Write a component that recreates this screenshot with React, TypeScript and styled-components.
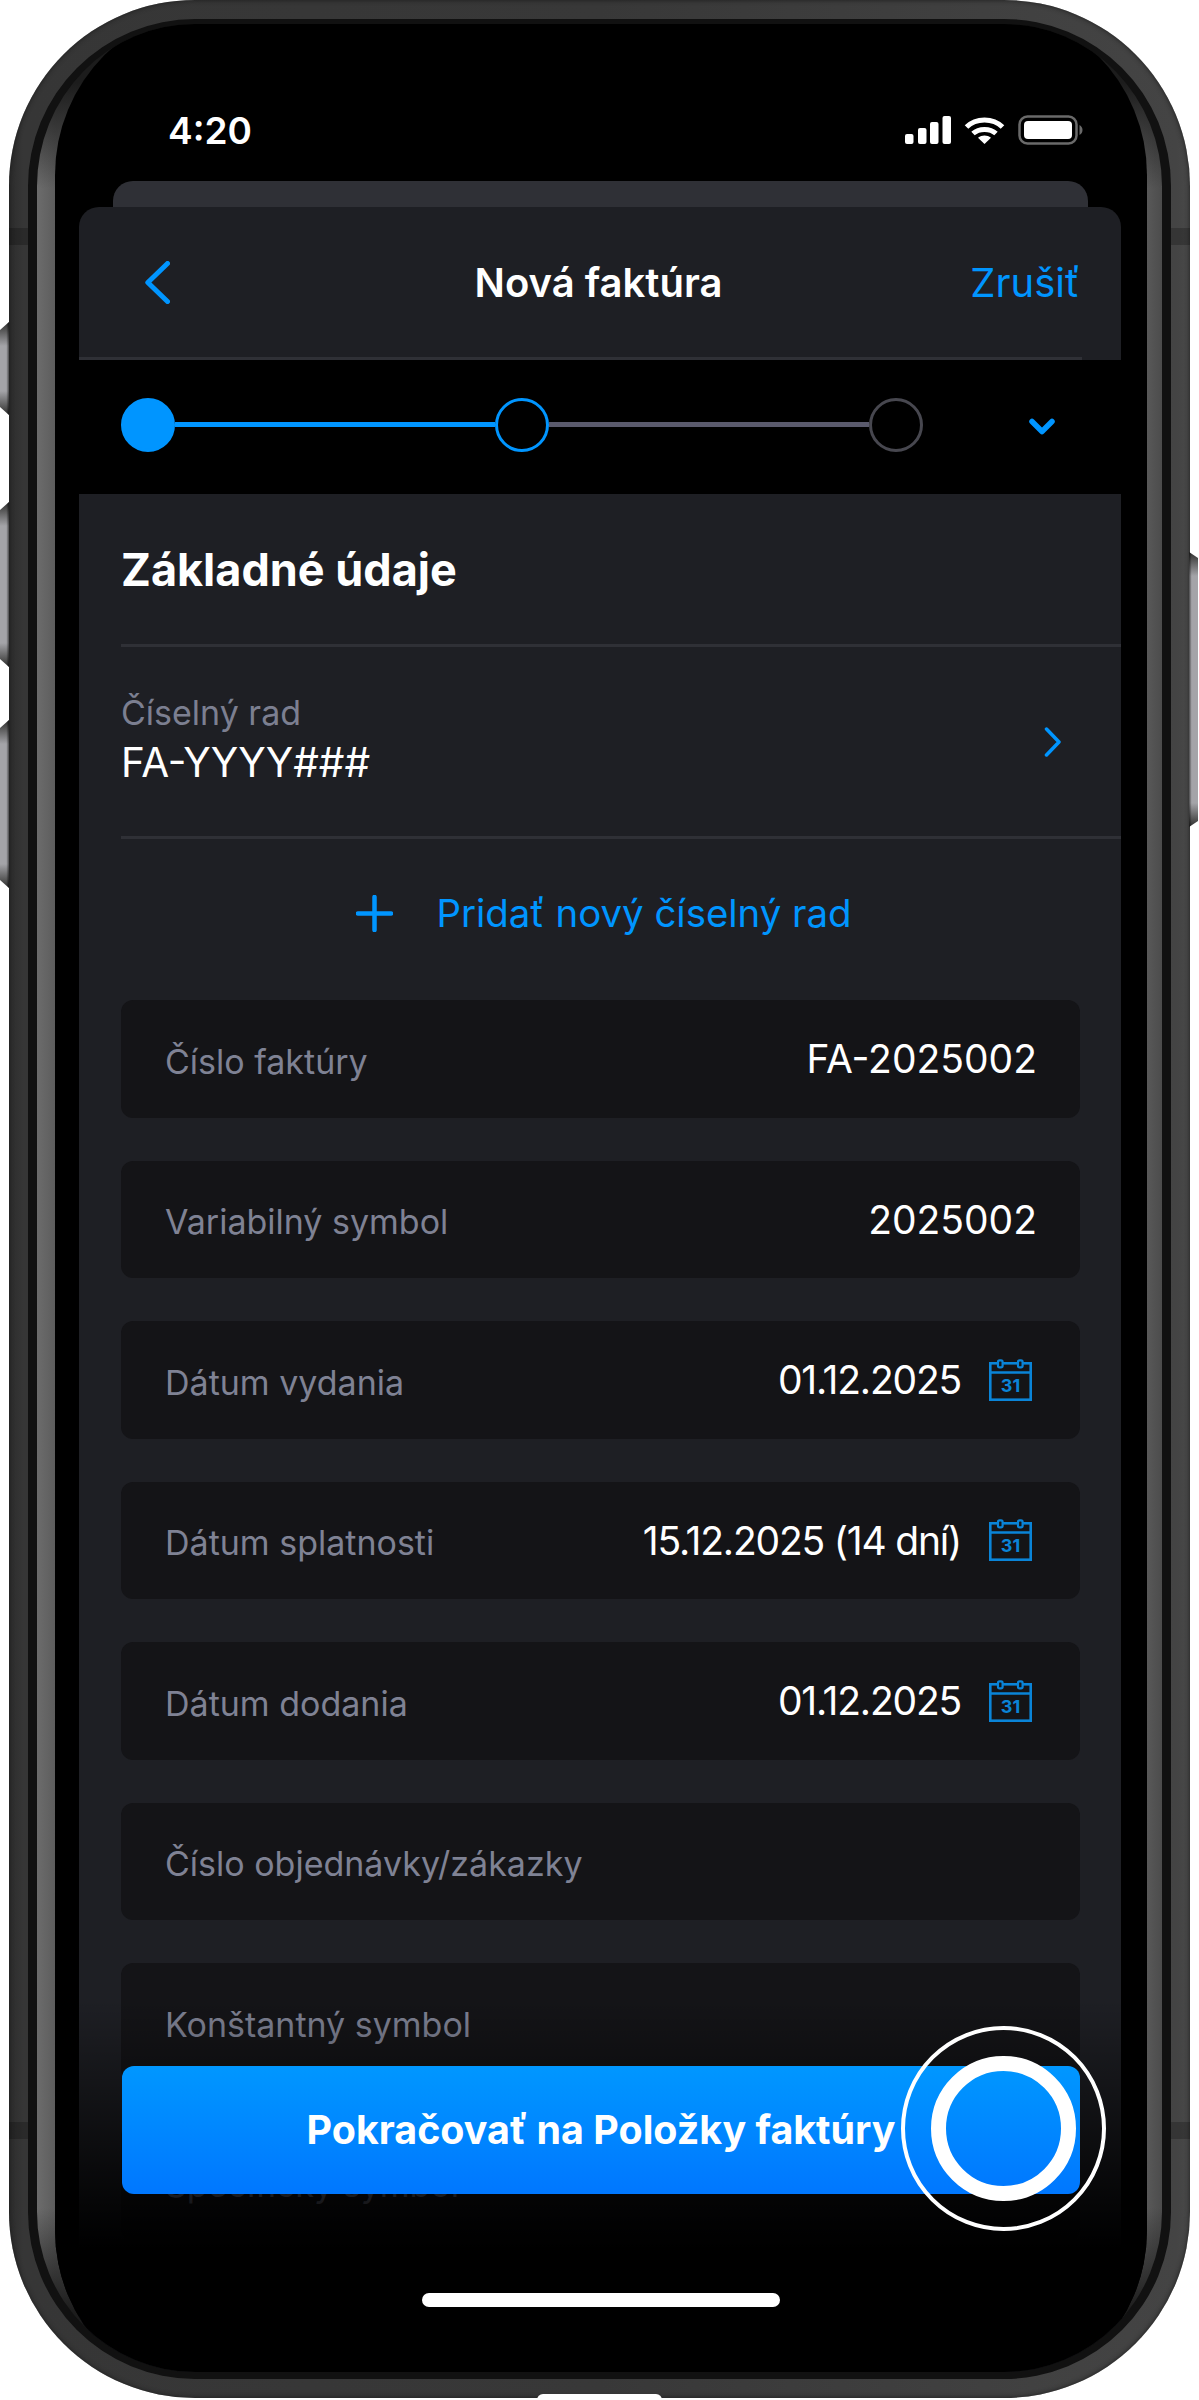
import styled, { createGlobalStyle } from 'styled-components'

interface FieldData {
	label: string
	value?: string
	calendar?: boolean
}

const FIELDS: FieldData[] = [
	{ label: 'Číslo faktúry', value: 'FA-2025002' },
	{ label: 'Variabilný symbol', value: '2025002' },
	{ label: 'Dátum vydania', value: '01.12.2025', calendar: true },
	{ label: 'Dátum splatnosti', value: '15.12.2025 (14 dní)', calendar: true },
	{ label: 'Dátum dodania', value: '01.12.2025', calendar: true },
	{ label: 'Číslo objednávky/zákazky' },
	{ label: 'Konštantný symbol' },
	{ label: 'Špecifický symbol' },
]

const BLUE = '#0095ff'

const GlobalStyle = createGlobalStyle`
	html, body {
		margin: 0;
		background: #fff;
	}
	body {
		font-family: Inter, 'Liberation Sans', sans-serif;
		overflow-x: hidden;
	}
`

const Page = styled.div`
	width: 1199px;
	height: 2400px;
	padding-left: 9px;
	box-sizing: border-box;
	overflow: hidden;
`

const Phone = styled.div`
	position: relative;
	width: 1181px;
	height: 2398px;
	box-sizing: border-box;
	padding: 19px;
	border-radius: 186px;
	background: linear-gradient(90deg, #2c2c2c 0%, #363636 1.2%, #383838 50%, #444 98.8%, #484848 100%);
	box-shadow: inset 0 0 5px #1c1c1c;
`

const Bezel = styled.div`
	height: 100%;
	box-sizing: border-box;
	border-style: solid;
	border-color: #111;
	border-width: 5px 9px 7px;
	border-radius: 167px;
	overflow: hidden;
	background:
		linear-gradient(180deg, #1c1c1c 2.5%, rgba(28, 28, 28, 0) 7%, rgba(28, 28, 28, 0) 93%, #1c1c1c 97.5%),
		linear-gradient(90deg, #6c6c6c 0, #5c5c5c 1.7%, #555 50%, #5c5c5c 98.3%, #4c4c4c 100%);
`

const Screen = styled.div`
	position: relative;
	height: 2395px;
	margin: -19px 15px 0 18px;
	border-radius: 170px;
	background: #000;
	overflow: hidden;
`

const SideButton = styled.div<{ $side: 'left' | 'right'; $top: number; $height: number }>`
	position: absolute;
	top: ${p => p.$top}px;
	height: ${p => p.$height}px;
	width: 9px;
	${p => (p.$side === 'left' ? 'left: -9px;' : 'right: -8px;')}
	background:
		linear-gradient(${p => (p.$side === 'left' ? '90deg' : '270deg')}, rgba(0, 0, 0, 0) 70%, rgba(0, 0, 0, 0.55) 100%),
		linear-gradient(180deg, #2e2e2e 0, #555 8px, #a4a4a8 24px, #a4a4a8 calc(100% - 24px), #555 calc(100% - 8px), #2e2e2e 100%);
	clip-path: ${p =>
		p.$side === 'left'
			? 'polygon(100% 0, 100% 100%, 0 calc(100% - 8px), 0 8px)'
			: 'polygon(0 0, 100% 6px, 100% calc(100% - 6px), 0 100%)'};
`

const AntennaBand = styled.div<{ $side: 'left' | 'right'; $top: number }>`
	position: absolute;
	top: ${p => p.$top}px;
	${p => p.$side}: 0;
	width: 19px;
	height: 17px;
	background: rgba(0, 0, 0, 0.22);
`

const BottomTab = styled.div`
	position: absolute;
	left: 528px;
	bottom: -2px;
	width: 125px;
	height: 6px;
	border-radius: 8px 8px 0 0;
	background: #fff;
`

const StatusBar = styled.div`
	display: flex;
	align-items: center;
	justify-content: space-between;
	height: 40px;
	padding: 105px 64px 31px 113px;
`

const Time = styled.span`
	font-size: 37px;
	font-weight: 600;
	color: #fff;
`

const StatusIcons = styled.div`
	display: flex;
	align-items: center;
	gap: 13px;
`

const BackSheet = styled.div`
	height: 26px;
	margin: 0 59px 0 58px;
	border-radius: 20px 20px 0 0;
	background: #2f3036;
`

const Sheet = styled.section`
	margin: 0 26px 0 24px;
	height: 2189px;
	border-radius: 20px 20px 0 0;
	background: #1e1f24;
	overflow: hidden;
`

const Header = styled.header`
	display: grid;
	grid-template-columns: 1fr auto 1fr;
	align-items: center;
	height: 150px;
	padding: 0 41px 0 66px;
`

const BackButton = styled.svg`
	display: block;
`

const Title = styled.h1`
	margin: 0 0 0 -28px;
	font-size: 40px;
	font-weight: 600;
	color: #fff;
`

const Cancel = styled.span`
	justify-self: end;
	font-size: 40px;
	color: ${BLUE};
`

const HeaderLine = styled.div`
	height: 3px;
	margin-right: 39px;
	background: #2f3036;
`

const Stepper = styled.div`
	display: flex;
	align-items: center;
	height: 129px;
	padding: 0 0 5px 42px;
	background: #000;
`

const Step = styled.div<{ $state: 'done' | 'current' | 'todo' }>`
	flex: none;
	width: 54px;
	height: 54px;
	box-sizing: border-box;
	border-radius: 50%;
	border: 3px solid ${p => (p.$state === 'todo' ? '#47474f' : BLUE)};
	background: ${p => (p.$state === 'done' ? BLUE : 'transparent')};
`

const StepLine = styled.div<{ $active?: boolean }>`
	flex: none;
	width: 320px;
	height: 5px;
	background: ${p => (p.$active ? BLUE : '#5a5a6c')};
`

const ExpandIcon = styled.svg`
	margin: 4px 0 0 106px;
`

const SectionTitle = styled.h2`
	display: flex;
	align-items: center;
	height: 150px;
	margin: 0 0 0 42px;
	font-size: 45px;
	font-weight: 700;
	color: #fff;
`

const Rule = styled.div`
	height: 3px;
	margin-left: 42px;
	background: #2f3036;
`

const SeriesRow = styled.div`
	display: flex;
	align-items: center;
	justify-content: space-between;
	height: 189px;
	padding: 0 60px 0 42px;
`

const SeriesText = styled.div`
	display: flex;
	flex-direction: column;
	gap: 5px;
	margin-bottom: 6px;
`

const SeriesLabel = styled.span`
	font-size: 34px;
	line-height: 44px;
	color: #7c7f91;
`

const SeriesValue = styled.span`
	font-size: 40.5px;
	line-height: 46px;
	color: #fff;
`

const AddRow = styled.div`
	display: flex;
	align-items: center;
	justify-content: center;
	gap: 43px;
	height: 148px;
	margin-bottom: 13px;
	padding-left: 8px;
	font-size: 38.4px;
	color: ${BLUE};
`

const Fields = styled.div`
	display: flex;
	flex-direction: column;
	gap: 43px;
	margin: 0 41px 0 42px;
`

const Field = styled.div`
	display: flex;
	flex: none;
	align-items: center;
	justify-content: space-between;
	height: 117.5px;
	box-sizing: border-box;
	padding: 0 43px 0 44px;
	border-radius: 12px;
	background: #141417;
`

const FieldLabel = styled.span`
	padding-top: 5px;
	font-size: 34px;
	color: #7f8294;
`

const FieldValue = styled.span<{ $tight?: boolean }>`
	display: flex;
	align-items: center;
	gap: 28px;
	font-size: 39px;
	letter-spacing: ${p => (p.$tight ? '-1.2px' : '0')};
	color: #fff;
`

const CalendarIcon = styled.svg`
	flex: none;
	margin-right: 5px;
	letter-spacing: 0;
`

const Fade = styled.div`
	position: absolute;
	left: 0;
	right: 0;
	bottom: 0;
	height: 400px;
	background: linear-gradient(180deg, rgba(0, 0, 0, 0) 0%, #000 62%);
`

const PrimaryButton = styled.button`
	position: absolute;
	left: 67px;
	right: 67px;
	bottom: 206px;
	height: 128px;
	border: 0;
	border-radius: 12px;
	font-family: inherit;
	font-size: 39.4px;
	font-weight: 700;
	color: #fff;
	background: linear-gradient(180deg, #0097ff 0%, #0077ff 100%);
`

const Ring = styled.div<{ $size: number; $stroke: number }>`
	position: absolute;
	left: ${p => 948 - p.$size / 2}px;
	bottom: ${p => 272 - p.$size / 2}px;
	width: ${p => p.$size}px;
	height: ${p => p.$size}px;
	box-sizing: border-box;
	border: ${p => p.$stroke}px solid #fff;
	border-radius: 50%;
`

const HomeBar = styled.div`
	position: absolute;
	left: 367px;
	bottom: 93px;
	width: 358px;
	height: 14px;
	border-radius: 7px;
	background: #fff;
`

const Calendar = () => (
	<CalendarIcon width='43' height='42' viewBox='0 0 43 42' fill='none' stroke='#0a84d8' strokeWidth='2.6'>
		<rect x='1.3' y='4.3' width='40.4' height='36.4' />
		<path d='M1.3 13.5H41.7' />
		<rect x='9' y='1.3' width='4.6' height='7' rx='1.6' fill='#141417' strokeWidth='2.2' />
		<rect x='29' y='1.3' width='4.6' height='7' rx='1.6' fill='#141417' strokeWidth='2.2' />
		<text x='21.5' y='33' textAnchor='middle' fontFamily='Inter, sans-serif' fontSize='18' fontWeight='700' fill='#0a84d8' stroke='none'>
			31
		</text>
	</CalendarIcon>
)

const App = () => (
	<Page>
		<GlobalStyle />
		<Phone>
			<SideButton $side='left' $top={322} $height={93} />
			<SideButton $side='left' $top={502} $height={165} />
			<SideButton $side='left' $top={720} $height={168} />
			<SideButton $side='right' $top={552} $height={275} />
			<AntennaBand $side='left' $top={228} />
			<AntennaBand $side='right' $top={228} />
			<AntennaBand $side='left' $top={2122} />
			<AntennaBand $side='right' $top={2122} />
			<Bezel>
				<Screen>
					<StatusBar>
						<Time>4:20</Time>
						<StatusIcons>
							<svg width='46' height='28' viewBox='0 0 46 28' fill='#fff'>
								<rect x='0' y='18' width='8.5' height='10' rx='2' />
								<rect x='13' y='12' width='8.5' height='16' rx='2' />
								<rect x='25' y='6' width='8.5' height='22' rx='2' />
								<rect x='37.5' y='0' width='8.5' height='28' rx='2' />
							</svg>
							<svg width='41' height='28' viewBox='0 0 41 28' fill='none' stroke='#fff' strokeWidth='5'>
								<path d='M2.5 11C12 1.5 29 1.5 38.5 11' />
								<path d='M9 17.5C15 12 26 12 32 17.5' />
								<path d='M20.5 28L14 21.8C18 18.8 23 18.8 27 21.8Z' fill='#fff' stroke='none' />
							</svg>
							<svg width='65' height='30' viewBox='0 0 65 30' fill='none'>
								<rect x='1.5' y='1.5' width='57' height='27' rx='8' stroke='#6a6a6a' strokeWidth='2.5' />
								<rect x='6' y='6' width='48' height='18' rx='4' fill='#fff' />
								<path d='M61.5 10C63.5 11 64.5 13 64.5 15C64.5 17 63.5 19 61.5 20Z' fill='#6a6a6a' />
							</svg>
						</StatusIcons>
					</StatusBar>
					<BackSheet />
					<Sheet>
						<Header>
							<BackButton width='25' height='43' viewBox='0 0 25 43' fill='none' stroke={BLUE} strokeWidth='5' strokeLinecap='round' strokeLinejoin='round'>
								<path d='M22.5 2.5L2.8 21.5L22.5 40.5' />
							</BackButton>
							<Title>Nová faktúra</Title>
							<Cancel>Zrušiť</Cancel>
						</Header>
						<HeaderLine />
						<Stepper>
							<Step $state='done' />
							<StepLine $active />
							<Step $state='current' />
							<StepLine />
							<Step $state='todo' />
							<ExpandIcon width='26' height='18' viewBox='0 0 26 18' fill='none' stroke={BLUE} strokeWidth='5.5' strokeLinecap='round' strokeLinejoin='round'>
								<path d='M3 3.5L13 13.5L23 3.5' />
							</ExpandIcon>
						</Stepper>
						<SectionTitle>Základné údaje</SectionTitle>
						<Rule />
						<SeriesRow>
							<SeriesText>
								<SeriesLabel>Číselný rad</SeriesLabel>
								<SeriesValue>FA-YYYY###</SeriesValue>
							</SeriesText>
							<svg width='17' height='30' viewBox='0 0 17 30' fill='none' stroke={BLUE} strokeWidth='3.5' strokeLinecap='round' strokeLinejoin='round'>
								<path d='M2.5 2L15 15L2.5 28' />
							</svg>
						</SeriesRow>
						<Rule />
						<AddRow>
							<svg width='37' height='37' viewBox='0 0 37 37' fill='none' stroke={BLUE} strokeWidth='4.5' strokeLinecap='round'>
								<path d='M18.5 2V35M2 18.5H35' />
							</svg>
							Pridať nový číselný rad
						</AddRow>
						<Fields>
							{FIELDS.map(field => (
								<Field key={field.label}>
									<FieldLabel>{field.label}</FieldLabel>
									{field.value && (
										<FieldValue $tight={field.calendar}>
											{field.value}
											{field.calendar && <Calendar />}
										</FieldValue>
									)}
								</Field>
							))}
						</Fields>
					</Sheet>
					<Fade />
					<PrimaryButton>Pokračovať na Položky faktúry</PrimaryButton>
					<Ring $size={205} $stroke={4} />
					<Ring $size={145} $stroke={15.5} />
					<HomeBar />
				</Screen>
			</Bezel>
			<BottomTab />
		</Phone>
	</Page>
)

export default App
